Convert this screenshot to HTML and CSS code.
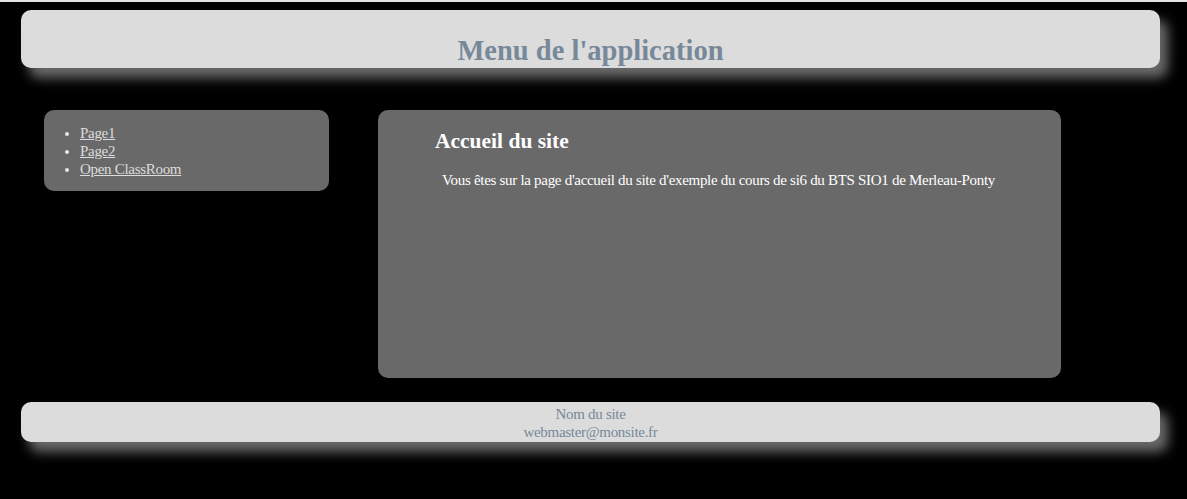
FILE: index.html
```html
<!DOCTYPE html>
<html lang="fr">
<head>
<meta charset="utf-8">
<title>Accueil</title>
<link rel="stylesheet" href="styles.css">
</head>
<body>
<header class="top">
  <h1 class="top-title">Menu de l'application</h1>
</header>
<div class="row">
  <nav class="side">
    <ul class="side-list">
      <li><a href="#">Page1</a></li>
      <li><a href="#">Page2</a></li>
      <li><a href="#">Open ClassRoom</a></li>
    </ul>
  </nav>
  <main class="content">
    <h2 class="content-title">Accueil du site</h2>
    <p class="content-text">Vous êtes sur la page d'accueil du site d'exemple du cours de si6 du BTS SIO1 de Merleau-Ponty</p>
  </main>
</div>
<footer class="foot">
  <div>Nom du site</div>
  <div>webmaster@monsite.fr</div>
</footer>
</body>
</html>
```
FILE: styles.css
```css
html { background: #000; }
body {
  margin: 0;
  background: #000;
  border-top: 2px solid #e4e4e4;
  padding: 8px 27px 57px 21px;
  font-family: "Liberation Serif", "Times New Roman", serif;
  font-size: 15px;
  letter-spacing: -0.3px;
  line-height: 18px;
}
.top {
  height: 58px;
  background: #dcdcdc;
  border-radius: 10px;
  box-shadow: 8px 10px 12px #6a6a6a;
  text-align: center;
}
.top-title {
  margin: 0;
  padding-top: 23px;
  font-size: 28.5px;
  letter-spacing: 0;
  line-height: 36px;
  color: #778899;
  font-weight: bold;
}
.row {
  display: flex;
  align-items: flex-start;
  gap: 49px;
  margin-top: 42px;
  padding-left: 23px;
}
.side {
  width: 285px;
  background: #696969;
  border-radius: 10px;
  padding: 14px 0 13px;
}
.side-list {
  margin: 0;
  padding-left: 36px;
  color: #e6e6e6;
}
.side-list a { color: #dcdcdc; }
.content {
  width: 683px;
  height: 268px;
  box-sizing: border-box;
  background: #696969;
  border-radius: 10px;
  padding: 19px 0 0 57px;
  color: #fff;
}
.content-title {
  margin: 0;
  font-size: 21.5px;
  letter-spacing: 0;
  line-height: 24px;
}
.content-text {
  margin: 18px 0 0 7px;
}
.foot {
  margin-top: 24px;
  height: 40px;
  box-sizing: border-box;
  padding-top: 3px;
  background: #dcdcdc;
  border-radius: 10px;
  box-shadow: 8px 10px 12px #6a6a6a;
  text-align: center;
  color: #778899;
}
```
